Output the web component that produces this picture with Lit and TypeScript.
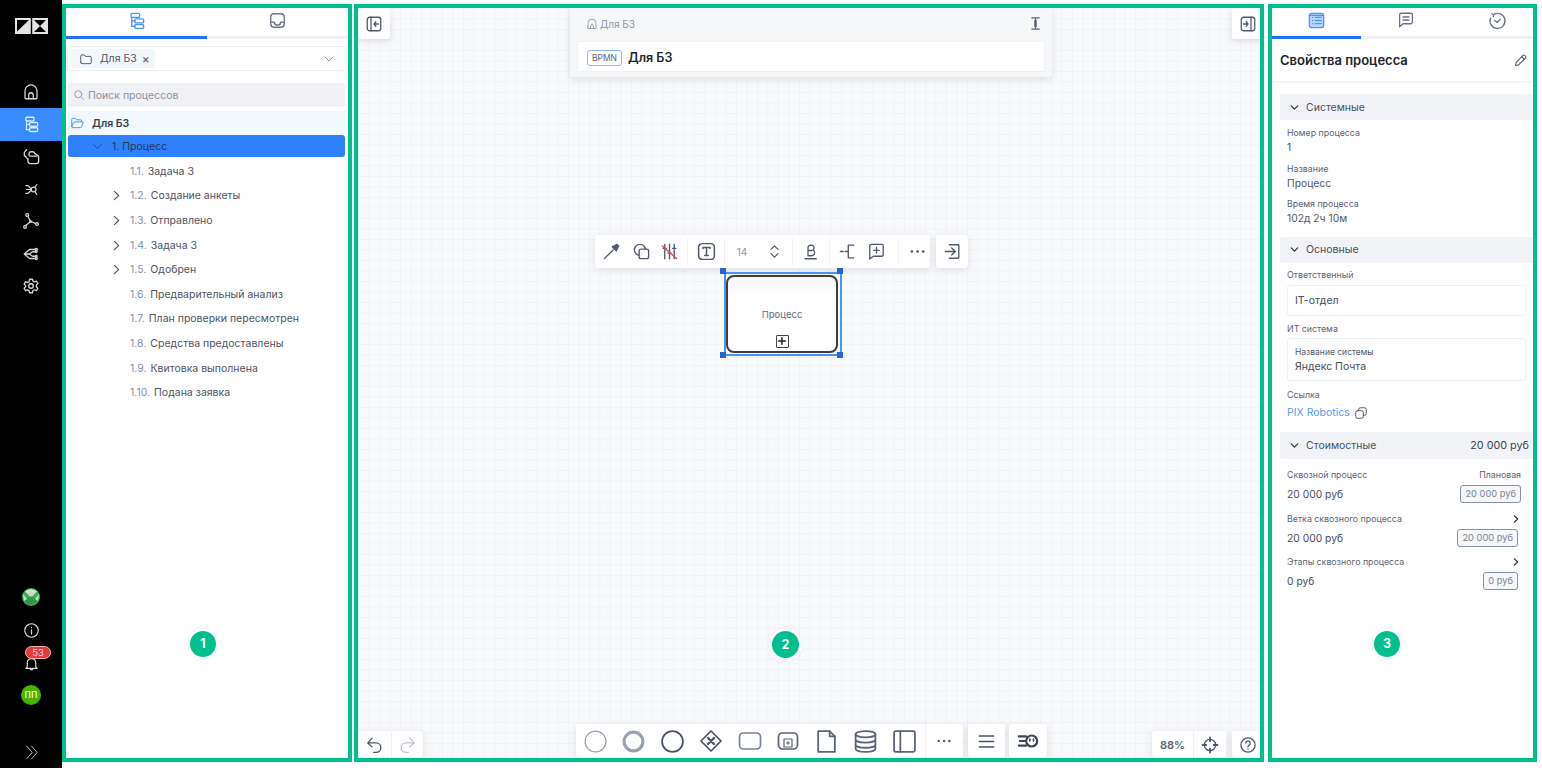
import { LitElement, html, css, svg } from "lit";
import { customElement } from "lit/decorators.js";

const ic = (size: number, body: unknown, color = "currentColor", sw = 1.7) => html`<svg width=${size} height=${size} viewBox="0 0 24 24" fill="none" stroke=${color} stroke-width=${sw} stroke-linecap="round" stroke-linejoin="round">${body}</svg>`;

const P = {
  home: svg`<path d="M4 20V10.5a8 8 0 0 1 16 0V20a1 1 0 0 1-1 1H5a1 1 0 0 1-1-1Z"/><path d="M9 21v-5a3 3 0 0 1 6 0v5"/>`,
  tree: svg`<rect x="5" y="3" width="11" height="5" rx="1.5"/><rect x="10" y="10" width="11" height="5" rx="1.5"/><rect x="10" y="17" width="11" height="5" rx="1.5"/><path d="M6 8v11.5h4M6 12.5h4"/>`,
  inbox: svg`<rect x="3.5" y="3.5" width="17" height="17" rx="4"/><path d="M3.5 14H8a4 4 0 0 0 8 0h4.5"/>`,
  hand: svg`<path d="M9 11V8.500a2.500 2.500 0 0 1 2.500-2.500H13a3 3 0 0 1 3 2l3.500 2.500a2 2 0 0 1 1.500 2V18a3 3 0 0 1-3 3H11a3.500 3.500 0 0 1-3.500-3v-3"/><path d="M3 10.500l4 4.500M3 6.500 6 3.500M3 6.500V11M10 11.500h9"/>`,
  fan: svg`<circle cx="15" cy="12" r="3.400"/><path d="M11.500 11 7 6.500H4M11.500 12H5M11.500 13 7 17.500H4M17 15l2.500 4M17 9l2.500-4"/>`,
  graph: svg`<circle cx="7" cy="4" r="1.800"/><circle cx="4" cy="20" r="1.800"/><circle cx="20" cy="16" r="1.800"/><path d="M8 6l3 6M5 18l5-4M18.200 15.500 13 13"/><circle cx="11.500" cy="12.700" r="1.200"/>`,
  split: svg`<path d="M3 12l7-6h7M3 12l7 6h7M3 12h7M10 12l4-3h3M10 12l4 3h3"/><circle cx="19" cy="6" r="1.400"/><circle cx="19" cy="9" r="1.100"/><circle cx="19" cy="15" r="1.100"/><circle cx="19" cy="18" r="1.400"/>`,
  gear: svg`<circle cx="12" cy="12" r="3"/><path d="M10 3h4l.6 2.600 2.300 1 2.300-1.300 2 3.400-2 1.800v2.600l2 1.800-2 3.400-2.300-1.300-2.300 1L14 21h-4l-.6-2.900-2.300-1-2.300 1.300-2-3.400 2-1.800V11.300l-2-1.800 2-3.400 2.300 1.300 2.300-1Z"/>`,
  info: svg`<circle cx="12" cy="12" r="9.500"/><path d="M12 11v6M12 7.500v.3"/>`,
  bell: svg`<path d="M6 17V11a6 6 0 0 1 12 0v6l2 2H4l2-2ZM10 19a2 2 0 0 0 4 0"/>`,
  dbl: svg`<path d="M5 3l8 9-8 9M12 3l8 9-8 9"/>`,
  folder: svg`<path d="M3 18V7a2 2 0 0 1 2-2h4l2 2.500h8a2 2 0 0 1 2 2V18a2 2 0 0 1-2 2H5a2 2 0 0 1-2-2Z"/>`,
  folderOpen: svg`<path d="M3 18V6a2 2 0 0 1 2-2h4l2 2.500h7a2 2 0 0 1 2 2V10"/><path d="M3 18l3-6.500a2 2 0 0 1 2-1.500h13a1.500 1.500 0 0 1 1.400 2L20 18a2.500 2.500 0 0 1-2.300 2H5a2 2 0 0 1-2-2Z"/>`,
  down: svg`<path d="M5 8.500l7 7 7-7"/>`,
  right: svg`<path d="M8 4.500l8 7.500-8 7.500"/>`,
  search: svg`<circle cx="10.500" cy="10.500" r="7"/><path d="M16 16l5 5"/>`,
  list: svg`<rect x="3" y="3" width="18" height="18" rx="3" fill="#bcd8ff"/><path d="M7 8h.5M10.500 8H18M7 12h.5M10.500 12H18M7 16h.5M10.500 16H18M3 5.500h18"/>`,
  chat: svg`<path d="M3.500 5a2 2 0 0 1 2-2h13a2 2 0 0 1 2 2v10a2 2 0 0 1-2 2H8l-4.500 4Z"/><path d="M8 8h8M8 12h8"/>`,
  clock: svg`<path d="M7 4.500A9.500 9.500 0 1 1 3.200 9M4.800 3.500 7 4.700 6.800 7"/><path d="M8.500 12l3 2.500 4-4"/>`,
  pen: svg`<path d="M4 20l1-5L16 4a2.100 2.100 0 0 1 3 0l1 1a2.100 2.100 0 0 1 0 3L9 19Z"/><path d="M14 6l4 4"/>`,
  copy: svg`<rect x="3" y="8" width="13" height="13" rx="3"/><path d="M8 8V6a3 3 0 0 1 3-3h7a3 3 0 0 1 3 3v7a3 3 0 0 1-3 3h-2"/>`,
  panelL: svg`<rect x="3" y="3" width="18" height="18" rx="3"/><path d="M8 3v18M18 12h-6M14.500 9 12 12l2.500 3"/>`,
  panelR: svg`<rect x="3" y="3" width="18" height="18" rx="3"/><path d="M16 3v18M6 12h6M9.500 9 12 12l-2.500 3"/>`,
  cursor: svg`<path d="M6 3h12M6 21h12M12 3v18"/><path d="M12 8v8" stroke-width="4"/>`,
  dropper: svg`<path d="M3 21 14 10"/><path d="M13 6l5 5 3-6-2-2Z" fill="currentColor"/>`,
  shapes: svg`<circle cx="10" cy="10" r="7"/><rect x="9" y="9" width="12" height="12" rx="2.500" fill="#fff"/>`,
  noLines: svg`<path d="M6 3v18M12 3v18M18 3v18M4 8h4M10 14h4M16 8h4"/><path d="M3 5l18 16" stroke="#e5484d"/>`,
  textBox: svg`<rect x="3" y="3" width="18" height="18" rx="4"/><path d="M8 8.500V7.500h8v1M12 7.500v9M10 16.500h4"/>`,
  updown: svg`<path d="M7 9l5-5 5 5M7 15l5 5 5-5"/>`,
  bold: svg`<path d="M8 14V6a3 3 0 0 1 3-3h1.500a3.500 3.500 0 0 1 2 6.400A4 4 0 0 1 13 17H8v-3ZM8 10h5"/><path d="M4 21h15"/>`,
  bracket: svg`<path d="M20 4h-7v16h7M3 12h3.500M9 12h4"/>`,
  addNote: svg`<path d="M3.500 5a2 2 0 0 1 2-2h13a2 2 0 0 1 2 2v11a2 2 0 0 1-2 2H8l-4.500 3.500Z"/><path d="M12 7v7M8.500 10.500h7"/>`,
  exit: svg`<path d="M3 12h12M11 7.500l4.500 4.500-4.500 4.500M8 3.500h11a1 1 0 0 1 1 1v15a1 1 0 0 1-1 1H8"/>`,
  undo: svg`<path d="M4 10h10a6 6 0 0 1 0 12h-3M9 4 3.500 10 9 15"/>`,
  redo: svg`<path d="M20 10H10a6 6 0 0 0 0 12h3M15 4l5.500 6L15 15"/>`,
  target: svg`<circle cx="12" cy="12" r="7.500"/><path d="M12 2v5M12 17v5M2 12h5M17 12h5" stroke-width="2.400"/>`,
  help: svg`<circle cx="12" cy="12" r="9.500"/><path d="M9 9.500a3 3 0 1 1 4.500 2.600c-1 .6-1.500 1.200-1.500 2.400M12 17.500v.3"/>`,
};

@customElement("app-root")
export class AppRoot extends LitElement {
  static styles = css`
    :host { display: block; width: 1542px; height: 768px; overflow: hidden; background: #fff; font-family: Inter, "Noto Sans", sans-serif; color: #3d4350; }
    * { box-sizing: border-box; }
    svg { display: block; flex: none; }
    .app { display: flex; height: 768px; }
    .rail { width: 62px; flex: none; background: #000; color: #d8d8d8; display: flex; flex-direction: column; align-items: center; }
    .logo { margin-top: 18px; margin-bottom: 42px; width: 33px; height: 16px; display: flex; }
    .ri { width: 62px; height: 32.300px; display: flex; align-items: center; justify-content: center; }
    .ri.on { background: #3a8bfd; color: #d9e9ff; }
    .rb { margin-top: auto; width: 62px; display: flex; flex-direction: column; align-items: center; }
    .ava { margin-bottom: 16px; }
    .info { margin-bottom: 16px; }
    .bell { position: relative; height: 17px; width: 62px; display: flex; justify-content: center; margin-bottom: 13px; }
    .cnt { position: absolute; left: 25px; top: -9px; width: 26px; height: 13px; border-radius: 7px; background: #e23b3b; border: 1px solid #f3b3b3; color: #ffd9d9; font-size: 9.500px; line-height: 11px; text-align: center; }
    .pp { width: 20px; height: 20px; border-radius: 50%; background: #46b500; color: #fff; font-size: 11px; line-height: 18px; text-align: center; margin-bottom: 39px; }
    .dbl { margin-bottom: 7px; color: #cfcfcf; }
    .frame { position: relative; margin-top: 4px; height: 758px; border: 4px solid #00bf8f; flex: none; background: #fff; }
    .f1 { width: 290px; }
    .f2 { width: 910px; margin-left: 2px; background-color: #f8f9fb; background-image: linear-gradient(#f1f2f6 1px, transparent 1px), linear-gradient(90deg, #f1f2f6 1px, transparent 1px); background-size: 10.500px 10.500px; overflow: hidden; }
    .f3 { width: 269px; margin-left: 4px; overflow: hidden; }
    .tabs { display: flex; height: 31px; border-bottom: 3px solid #f0f2f5; }
    .tab { flex: 1; display: flex; justify-content: center; padding-top: 3px; height: 31px; color: #6a7384; }
    .tab.on { border-bottom: 3px solid #1f74f5; color: #4c94f7; }
    .sel { margin: 7px 2px 0 1px; height: 25px; border: 1px solid #eef0f3; border-radius: 3px; display: flex; align-items: center; padding: 0 9px 0 3px; justify-content: space-between; }
    .chip { height: 19px; background: #f2f7fc; border-radius: 3px; display: flex; align-items: center; gap: 7px; padding: 0 5px 0 8px; font-size: 10.500px; color: #525a69; }
    .chip .x { margin-left: -2px; font-size: 12px; }
    .search { margin: 12px 3px 0 2px; height: 24px; background: #f0f1f4; border-radius: 3px; display: flex; align-items: center; gap: 3px; padding-left: 5px; font-size: 10.500px; color: #8d93a0; }
    .root { margin: 4px 2px 0 2px; height: 24px; background: #f1f8fe; display: flex; align-items: center; gap: 8px; padding-left: 2px; font-size: 10.500px; font-weight: 600; color: #3a3f4a; }
    .proc { margin: 0 3px 0 2px; height: 22px; background: #2f80fb; border-radius: 3px; display: flex; align-items: center; gap: 8px; padding-left: 23px; font-size: 10.500px; color: #26364f; }
    .rows { padding-top: 2px; }
    .row { height: 24.600px; display: flex; align-items: center; padding-left: 44px; font-size: 10.500px; color: #4e5462; }
    .row .ch { width: 20px; flex: none; color: #4e5868; }
    .row .n { color: #8493ab; margin-right: 4px; }
    .num { position: absolute; width: 26px; height: 26px; border-radius: 50%; background: #00bf8f; color: #fff; font-size: 12.500px; font-weight: 700; line-height: 26px; text-align: center; box-shadow: 0 0 0 3px #fff, 0 0 4px 3px rgba(0,0,0,.06); }
    .fl { position: absolute; background: #fff; border-radius: 3px; box-shadow: 0 2px 7px rgba(60,70,90,.14); display: flex; align-items: center; color: #515a6c; }
    .head { left: 212px; top: 0; width: 482px; height: 69px; background: #f6f7f9; display: block; padding: 3px 7px 0; }
    .crumb { height: 26px; display: flex; align-items: center; gap: 2px; font-size: 10px; color: #9097a5; padding-left: 9px; justify-content: flex-start; position: relative; }
    .cur { position: absolute; right: 2px; top: 5px; color: #596273; }
    .name { margin-top: 4px; height: 31px; background: #fff; display: flex; align-items: center; padding: 2px 0 0 9px; gap: 6px; font-size: 12.500px; font-weight: 600; color: #22262e; border: 1px solid #f0f1f4; }
    .bp { height: 16px; width: 35px; border: 1px solid #8fb8f5; border-radius: 3px; font-size: 8.500px; font-weight: 400; line-height: 14px; text-align: center; color: #5d6675; }
    .tb { left: 237px; top: 227px; width: 335px; height: 33px; padding-left: 1px; }
    .tool { display: flex; align-items: center; justify-content: center; flex: none; }
    .sep { width: 1px; height: 26px; background: #eef0f3; flex: none; margin: 0 5px; }
    .node { position: absolute; left: 368px; top: 267px; width: 112px; height: 78px; background: linear-gradient(#f7f7f7, #fff 30%); border: 2px solid #3e3e3e; border-radius: 8px; font-size: 9.500px; color: #666d7a; }
    .lbl { position: absolute; left: 0; right: 0; top: 32px; text-align: center; }
    .plus { position: absolute; left: 48px; top: 58px; width: 13px; height: 13px; border: 1.500px solid #444; border-radius: 1px; }
    .selbox { position: absolute; left: 365.500px; top: 264px; width: 118px; height: 84px; border: 2px solid #4d94f0; }
    .h { position: absolute; width: 6px; height: 6px; background: #2a63d8; }
    .bt { left: 218px; top: 716px; height: 34px; width: 387px; }
    .bt .tool { width: 38.600px; }
    .section { margin: 0 0 0 8px; height: 26px; background: #f2f3f6; border-radius: 3px 0 0 3px; display: flex; align-items: center; font-size: 10.500px; color: #4a505c; padding: 0 4px 0 9px; gap: 6px; }
    .section .amt { margin-left: auto; color: #3d4350; font-size: 10.800px; }
    .ptitle { height: 44px; display: flex; align-items: center; justify-content: space-between; padding: 0 5px 0 8px; font-size: 13px; font-weight: 600; color: #21252d; border-bottom: 2px solid #f4f5f7; margin-bottom: 11px; }
    .body { padding: 0 7px 0 15px; }
    .lab { font-size: 8.800px; line-height: 11px; color: #5b6474; }
    .val { font-size: 10.300px; line-height: 14px; color: #535966; margin-top: 2px; }
    .fd { padding-top: 7px; height: 35.500px; }
    .box { border: 1px solid #eef0f3; border-radius: 3px; height: 31px; display: flex; align-items: center; padding-left: 7px; font-size: 10.500px; color: #464c58; margin-top: 5px; }
    .sys { height: 43px; margin-top: 4px; display: block; padding-top: 8px; line-height: 14px; }
    .sys .lab { color: #4f5765; margin-bottom: 2px; font-size: 8.500px; }
    .link { display: flex; align-items: center; gap: 4px; color: #5b9bf6; font-size: 10.500px; margin-top: 6px; height: 14px; }
    .link svg { color: #535966; }
    .cost { padding: 0 12px 0 15px; }
    .cr { display: flex; justify-content: space-between; align-items: center; }
    .ct { height: 12px; font-size: 8.800px; color: #5e6572; margin-top: 9px; }
    .cv { height: 18px; margin-top: 4px; font-size: 10.300px; color: #484e5a; }
    .cv.in { padding-right: 3px; }
    .tag { border: 1.500px solid #8791a2; border-radius: 3px; font-size: 9.300px; color: #7d8492; height: 18px; line-height: 15px; padding: 0 4px; background: #f6f7f8; }
  `;

  render() {
    const tree: [string, string, boolean][] = [
      ["1.1.", "Задача 3", false], ["1.2.", "Создание анкеты", true], ["1.3.", "Отправлено", true], ["1.4.", "Задача 3", true], ["1.5.", "Одобрен", true],
      ["1.6.", "Предварительный анализ", false], ["1.7.", "План проверки пересмотрен", false], ["1.8.", "Средства предоставлены", false], ["1.9.", "Квитовка выполнена", false], ["1.10.", "Подана заявка", false],
    ];
    const t = (w: number, p: unknown, s = 19, c = "currentColor") => html`<div class="tool" style="width:${w}px">${ic(s, p, c)}</div>`;
    return html`<div class="app">
      <nav class="rail">
        <div class="logo"><svg width="33" height="16" viewBox="0 0 33 16"><rect width="33" height="16" fill="#e4e4e4"/><path d="M2 2h12L2 13.500Z" fill="#000"/><path d="M15.800 0h1.400v16h-1.400Z" fill="#000"/><path d="M19 2h12l-6 6ZM19 14h12l-6-6Z" fill="#000"/></svg></div>
        <div class="ri">${ic(18, P.home)}</div>
        <div class="ri on">${ic(18, P.tree)}</div>
        <div class="ri">${ic(19, P.hand)}</div>
        <div class="ri">${ic(17, P.fan)}</div>
        <div class="ri">${ic(18, P.graph)}</div>
        <div class="ri">${ic(18, P.split)}</div>
        <div class="ri">${ic(18, P.gear)}</div>
        <div class="rb">
          <div class="ava"><svg width="18" height="18" viewBox="0 0 18 18"><circle cx="9" cy="9" r="9" fill="#3fae55"/><path d="M3 3.500 9 9l6-5.500A9 9 0 0 0 3 3.500Z" fill="#cfe9d3"/><path d="M2 12l7-4 7 4-3 4.500H5Z" fill="#2f9a45"/><path d="M1 6l4 5-3 2M17 6l-4 5 3 2" fill="#bfe5c6"/><circle cx="9" cy="6" r="2.500" fill="#d9d3cf"/></svg></div>
          <div class="info">${ic(17, P.info)}</div>
          <div class="bell">${ic(17, P.bell)}<span class="cnt">53</span></div>
          <div class="pp">пп</div>
          <div class="dbl">${ic(17, P.dbl, "currentColor", 1.300)}</div>
        </div>
      </nav>

      <section class="frame f1">
        <div class="tabs"><div class="tab on">${ic(19, P.tree)}</div><div class="tab">${ic(19, P.inbox)}</div></div>
        <div class="sel"><div class="chip">${ic(14, P.folder)}<span>Для БЗ</span><span class="x">×</span></div><span style="color:#8a93a3">${ic(14, P.down)}</span></div>
        <div class="search">${ic(12, P.search, "#8d93a0")}<span>Поиск процессов</span></div>
        <div class="root">${ic(14, P.folderOpen, "#4c94f7")}<span>Для БЗ</span></div>
        <div class="proc">${ic(13, P.down, "#26467a")}<span>1. Процесс</span></div>
        <div class="rows">${tree.map(([n, l, c]) => html`<div class="row"><span class="ch">${c ? ic(13, P.right, "currentColor", 2.200) : ""}</span><span class="n">${n}</span><span>${l}</span></div>`)}</div>
        <div class="num" style="left:124px;top:623px">1</div>
      </section>

      <section class="frame f2">
        <div class="fl" style="left:0;top:0;width:32px;height:31px;justify-content:center">${ic(18, P.panelL)}</div>
        <div class="fl head">
          <div class="crumb">${ic(12, P.home)}<span>Для БЗ</span><span class="cur">${ic(15, P.cursor)}</span></div>
          <div class="name"><span class="bp">BPMN</span><span>Для БЗ</span></div>
        </div>
        <div class="fl" style="left:874px;top:0;width:32px;height:31px;justify-content:center">${ic(18, P.panelR)}</div>

        <div class="fl tb">
          ${t(30, P.dropper)}${t(30, P.shapes)}${t(26, P.noLines)}<div class="sep"></div>
          ${t(26, P.textBox, 21)}<div class="sep" style="margin-right:7px"></div>
          <div class="tool" style="width:20px;font-size:10px;color:#8e96a4">14</div><div style="width:10px"></div>${t(26, P.updown, 17)}<div class="sep"></div>
          ${t(26, P.bold, 18)}<div class="sep"></div>
          ${t(24, P.bracket)}${t(34, P.addNote)}<div class="sep"></div>
          <div class="tool" style="width:26px">${ic(17, svg`<path d="M4 12h.2M12 12h.2M20 12h.2"/>`, "currentColor", 3.800)}</div>
        </div>
        <div class="fl" style="left:578px;top:227px;width:32px;height:33px;justify-content:center">${ic(19, P.exit)}</div>

        <div class="selbox"></div>
        <div class="node"><div class="lbl">Процесс</div><div class="plus">${ic(10, svg`<path d="M12 4v16M4 12h16"/>`, "#222", 3.600)}</div></div>
        <div class="h" style="left:362px;top:260px"></div><div class="h" style="left:479px;top:260px"></div>
        <div class="h" style="left:362px;top:344px"></div><div class="h" style="left:479px;top:344px"></div>

        <div class="fl" style="left:0;top:723px;width:65px;height:27px">
          <div class="tool" style="width:33px">${ic(19, P.undo, "#4c5566")}</div><div class="sep" style="margin:0"></div><div class="tool" style="width:31px">${ic(19, P.redo, "#bcc4d2")}</div>
        </div>

        <div class="fl bt">
          <div class="tool">${ic(25, svg`<circle cx="12" cy="12" r="10" stroke="#9aa2b0"/>`, "currentColor", 1.200)}</div>
          <div class="tool">${ic(25, svg`<circle cx="12" cy="12" r="9" stroke="#9aa2b0"/>`, "currentColor", 3)}</div>
          <div class="tool">${ic(25, svg`<circle cx="12" cy="12" r="10" stroke="#4a5468"/>`, "currentColor", 1.700)}</div>
          <div class="tool">${ic(24, svg`<path d="M12 2 22 12 12 22 2 12Z" stroke="#4a5468"/><path d="M9 9l6 6M15 9l-6 6" stroke="#4a5468" stroke-width="2.400"/>`)}</div>
          <div class="tool">${ic(24, svg`<rect x="1.500" y="4" width="21" height="16" rx="4" stroke="#7a8494"/>`)}</div>
          <div class="tool">${ic(24, svg`<rect x="2.500" y="4" width="19" height="16" rx="4" stroke="#5a6475"/><rect x="8" y="10" width="8" height="8" stroke="#5a6475" stroke-width="1.200"/><path d="M12 12.500v3M10.500 14h3" stroke="#5a6475" stroke-width="1"/>`)}</div>
          <div class="tool">${ic(25, svg`<path d="M4 2h11l5 5v15H4Z" stroke="#5a6475"/><path d="M15 2v5h5" stroke="#5a6475"/>`)}</div>
          <div class="tool">${ic(25, svg`<ellipse cx="12" cy="5" rx="9.500" ry="3" stroke="#5a6475"/><path d="M2.500 5v14c0 1.700 4.300 3 9.500 3s9.500-1.300 9.500-3V5M2.500 10c0 1.700 4.300 3 9.500 3s9.500-1.300 9.500-3M2.500 15c0 1.700 4.300 3 9.500 3s9.500-1.300 9.500-3" stroke="#5a6475"/>`)}</div>
          <div class="tool">${ic(25, svg`<rect x="2" y="2" width="20" height="20" rx="1.500" stroke="#5a6475"/><path d="M8 2v20" stroke="#5a6475"/>`)}</div>
          <div class="sep" style="height:34px;margin:0 0 0 1.500px"></div>
          <div class="tool" style="width:36px">${ic(16, svg`<path d="M4 12h.2M12 12h.2M20 12h.2"/>`, "currentColor", 3.600)}</div>
        </div>
        <div class="fl" style="left:610px;top:716px;width:37px;height:34px;justify-content:center">${ic(19, svg`<path d="M3 5h18M3 12h18M3 19h18"/>`, "#4a5468", 2)}</div>
        <div class="fl" style="left:651px;top:716px;width:38px;height:34px;justify-content:center">${ic(22, svg`<circle cx="16" cy="12" r="6" stroke-width="2.400"/><path d="M2 7h8M3 12h6M2 17h8" stroke-width="2.400"/><path d="M14 10v2M18 10v2" stroke-width="1.800"/>`, "#3e4656")}</div>

        <div class="fl" style="left:794px;top:723px;width:74px;height:27px">
          <div class="tool" style="width:41px;font-size:11px;font-weight:600;color:#5d6675">88%</div><div class="sep" style="margin:0"></div><div class="tool" style="width:32px">${ic(18, P.target, "#4a5468")}</div>
        </div>
        <div class="fl" style="left:874px;top:723px;width:32px;height:27px;justify-content:center">${ic(18, P.help, "#4a5468")}</div>
        <div class="num" style="left:414px;top:623px;width:27px;height:27px;line-height:27px;">2</div>
      </section>

      <section class="frame f3">
        <div class="tabs">
          <div class="tab on" style="flex:0 0 89px">${ic(19, P.list, "#4c94f7")}</div><div class="tab" style="flex:0 0 89px">${ic(18, P.chat)}</div><div class="tab" style="padding-left:12px">${ic(19, P.clock)}</div>
        </div>
        <div class="ptitle"><span>Свойства процесса</span>${ic(15, P.pen, "#5c6473")}</div>
        <div class="section">${ic(11, P.down, "#333", 2.600)}<span>Системные</span></div>
        <div class="body">
          <div class="fd"><div class="lab">Номер процесса</div><div class="val">1</div></div>
          <div class="fd"><div class="lab">Название</div><div class="val">Процесс</div></div>
          <div class="fd"><div class="lab">Время процесса</div><div class="val">102д 2ч 10м</div></div>
        </div>
        <div class="section" style="margin-top:10px">${ic(11, P.down, "#333", 2.600)}<span>Основные</span></div>
        <div class="body">
          <div class="lab" style="margin-top:6px">Ответственный</div>
          <div class="box">IT-отдел</div>
          <div class="lab" style="margin-top:7px">ИТ система</div>
          <div class="box sys"><div class="lab">Название системы</div><div>Яндекс Почта</div></div>
          <div class="lab" style="margin-top:8px">Ссылка</div>
          <div class="link"><span>PIX Robotics</span>${ic(14, P.copy)}</div>
        </div>
        <div class="section" style="margin-top:12px;height:27px">${ic(11, P.down, "#333", 2.600)}<span>Стоимостные</span><span class="amt">20 000 руб</span></div>
        <div class="cost">
          <div class="cr ct" style="margin-top:10px"><span>Сквозной процесс</span><span>Плановая</span></div>
          <div class="cr cv"><span>20 000 руб</span><span class="tag">20 000 руб</span></div>
          <div class="cr ct" style="margin-top:10px"><span>Ветка сквозного процесса</span>${ic(10, P.right, "#222", 2.800)}</div>
          <div class="cr cv in"><span>20 000 руб</span><span class="tag">20 000 руб</span></div>
          <div class="cr ct"><span>Этапы сквозного процесса</span>${ic(10, P.right, "#222", 2.800)}</div>
          <div class="cr cv in"><span>0 руб</span><span class="tag">0 руб</span></div>
        </div>
        <div class="num" style="left:102px;top:623px">3</div>
      </section>
    </div>`;
  }
}
